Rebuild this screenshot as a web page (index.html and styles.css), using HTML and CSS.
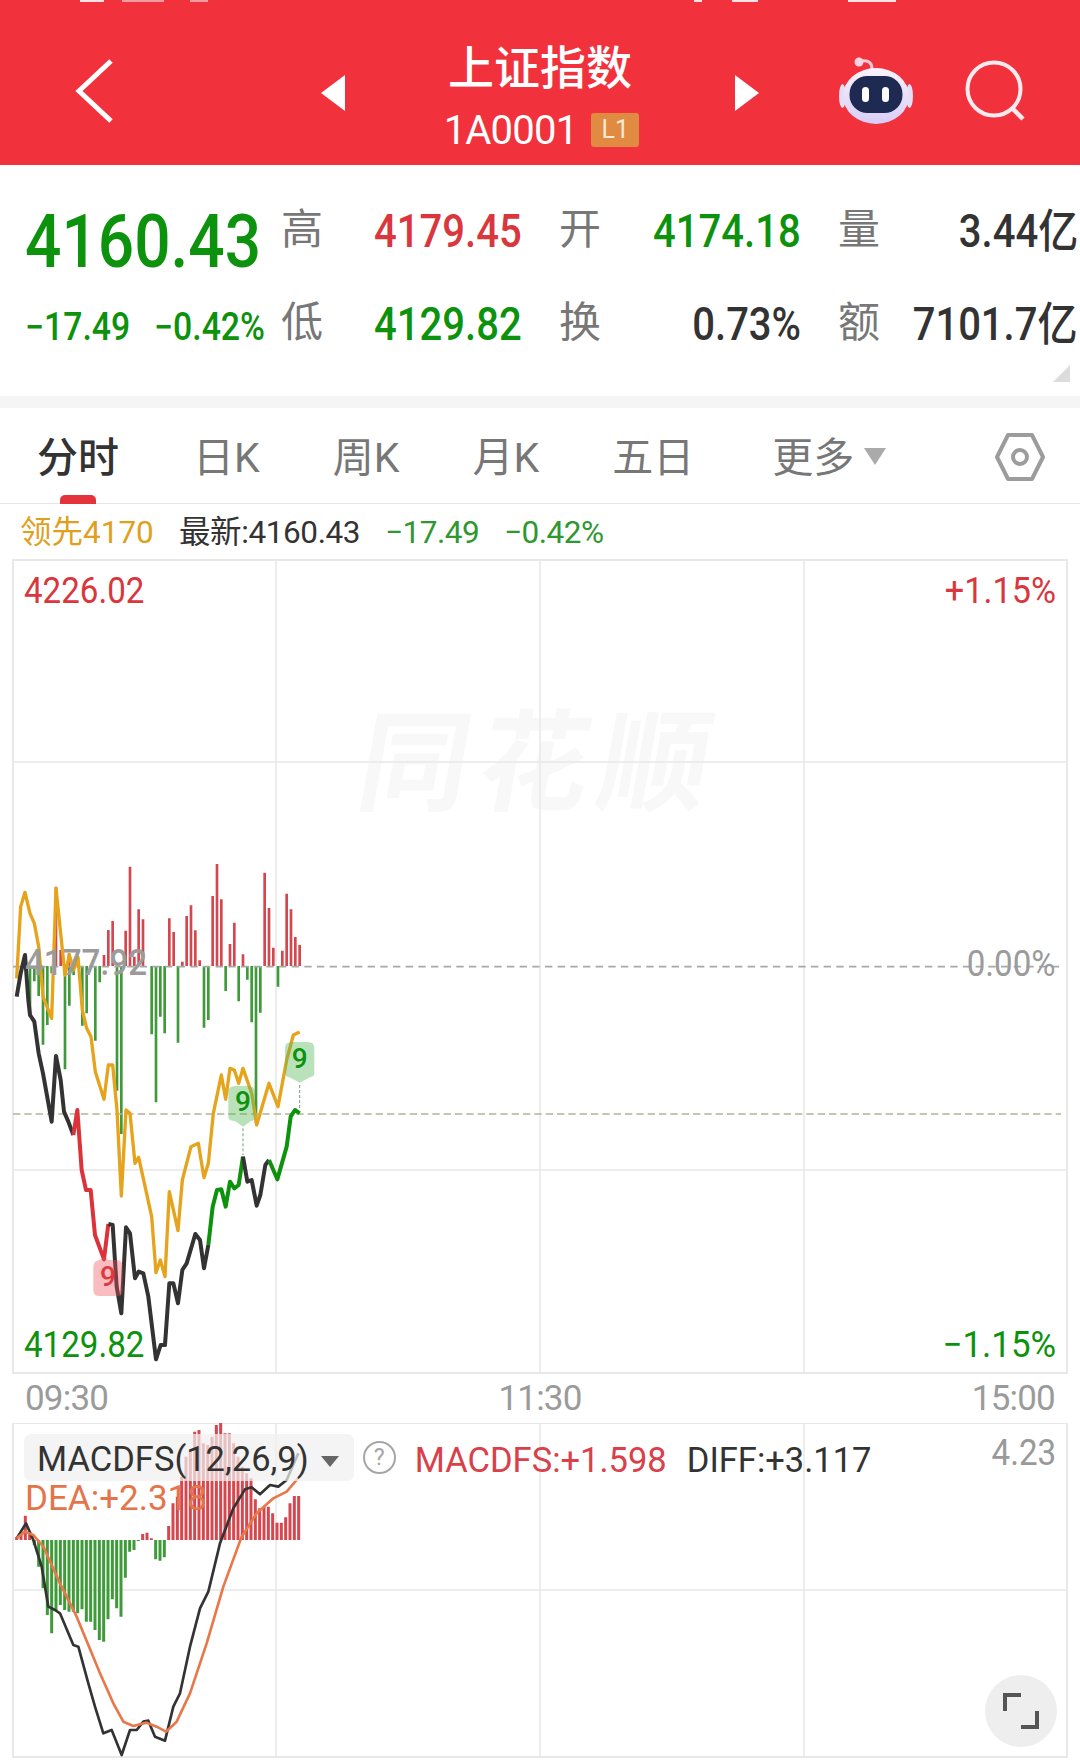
FILE: index.html
```html
<!doctype html>
<html>
<head>
    <meta charset="UTF-8">
    <meta name="viewport" content="width=device-width, initial-scale=1.0">
    <title>上证指数 - 分时</title>
    <link rel="stylesheet" href="styles.css">
</head>

<body>
    <div id="page-header">
        <div class="status-bits">
            <span class="bit bit-a"></span><span class="bit bit-b"></span><span class="bit bit-c"></span>
            <span class="bit bit-d"></span><span class="bit bit-e"></span><span class="bit bit-f"></span>
        </div>
        <div class="header-row">
            <div class="back-cell">
                <svg width="40" height="64" viewBox="0 0 40 64"><path class="line-icon" d="M36 2 L4 32 L36 62"/></svg>
            </div>
            <svg class="arrow" width="24" height="36" viewBox="0 0 24 36"><path d="M24 0 V36 L0 18 Z" fill="#fff"/></svg>
            <div class="title-block">
                <div class="title">上证指数</div>
                <div class="code-row"><span class="code">1A0001</span><span class="badge">L1</span></div>
            </div>
            <svg class="arrow" width="24" height="36" viewBox="0 0 24 36"><path d="M0 0 V36 L24 18 Z" fill="#fff"/></svg>
            <div class="header-icons">
                <!-- robot helper -->
                <svg width="74" height="68" viewBox="0 0 74 68">
                    <defs>
                        <linearGradient id="helmet" x1="0" y1="0" x2="0" y2="1">
                            <stop offset="0" stop-color="#f8f4fc"/>
                            <stop offset="1" stop-color="#d8ccf6"/>
                        </linearGradient>
                    </defs>
                    <path d="M33 12 C33 4 27 3 22 4" fill="none" stroke="#f3c6d6" stroke-width="3"/>
                    <circle cx="20" cy="5" r="4.5" fill="#f7d5e0"/>
                    <ellipse cx="3.5" cy="39" rx="3.5" ry="12" fill="#e6dcf5"/>
                    <ellipse cx="70.5" cy="39" rx="3.5" ry="12" fill="#e6dcf5"/>
                    <ellipse cx="37" cy="39" rx="33" ry="28" fill="url(#helmet)"/>
                    <rect x="10.5" y="19" width="53" height="37" rx="18" fill="#1f2a52"/>
                    <rect x="23" y="30" width="7" height="15" rx="3.5" fill="#fff"/>
                    <rect x="43" y="30" width="7" height="15" rx="3.5" fill="#fff"/>
                </svg>
                <svg width="62" height="62" viewBox="0 0 62 62">
                    <circle cx="29" cy="29" r="26.5" fill="none" stroke="#fdeaee" stroke-width="4"/>
                    <path d="M47 48 L58 59" fill="none" stroke="#fdeaee" stroke-width="4.5"/>
                </svg>
            </div>
        </div>
    </div>

    <div id="quote">
        <div class="big green"><span>4160.43</span></div>
        <div class="lbl">高</div>
        <div class="val red">4179.45</div>
        <div class="lbl">开</div>
        <div class="val green">4174.18</div>
        <div class="lbl">量</div>
        <div class="val last">3.44亿</div>

        <div class="sub green"><span>−17.49</span><span>−0.42%</span></div>
        <div class="lbl">低</div>
        <div class="val green">4129.82</div>
        <div class="lbl">换</div>
        <div class="val">0.73%</div>
        <div class="lbl">额</div>
        <div class="val last">7101.7亿</div>
        <div class="corner"></div>
    </div>

    <div id="tabs">
        <div class="tab active">分时</div>
        <div class="tab">日K</div>
        <div class="tab">周K</div>
        <div class="tab">月K</div>
        <div class="tab wide">五日</div>
        <div class="tab more">更多<i class="caret"></i></div>
        <svg class="hex" width="52" height="50" viewBox="0 0 52 50">
            <path d="M14 3 H38 L49 25 L38 47 H14 L3 25 Z" fill="none" stroke="#9c9c9c" stroke-width="4" stroke-linejoin="round"/>
            <circle cx="26" cy="25" r="7" fill="none" stroke="#9c9c9c" stroke-width="4"/>
        </svg>
    </div>

    <div id="legend">
        <span class="lead">领先4170</span>
        <span class="latest">最新:4160.43</span>
        <span class="chg">−17.49</span>
        <span class="chg">−0.42%</span>
    </div>

    <div class="chart">
        <div class="watermark">同花顺</div>
        <svg class="plot" width="1080" height="815" viewBox="0 559 1080 815">
            <g class="grid">
                <path class="grid-edge" d="M13 560 H1067 V1373 H13 Z"/>
                <path d="M276 560 V1373 M540 560 V1373 M804 560 V1373 M13 762 H1067 M13 1170 H1067"/>
            </g>
            <g transform="translate(0 840) scale(.33333)">
                <path class="bar bar-red" d="M168 378V140M182 378V330M207 378V340M312 378V345M325 378V270M338 378V243M377 378V272M390 378V80M403 378V350M416 378V208M429 378V238M508 378V235M521 378V276M547 378V365M560 378V228M573 378V196M586 378V271M599 378V361M638 378V168M651 378V72M664 378V178M690 378V312M703 378V248M729 378V343M794 378V98M807 378V204M820 378V323M847 378V332M860 378V161M873 378V208M886 378V291M899 378V315"/>
                <path class="bar bar-green" d="M90 378V530M103 378V424M116 378V468M129 378V614M142 378V555M155 378V400M195 378V688M208 378V497M221 378V405M247 378V557M260 378V520M286 378V602M299 378V427M351 378V752M364 378V882M455 378V583M468 378V787M481 378V530M494 378V580M534 378V608M612 378V563M625 378V540M677 378V453M716 378V484M742 378V419M755 378V547M768 378V849M781 378V518M834 378V440"/>
                <path class="zero-line" d="M39 380 H3183"/>
                <path class="last-line" d="M39 822 H3183"/>
                <path class="avg" d="M50 415 L62 200 75 157 90 220 103 250 116 320 129 470 155 535 168 145 182 280 195 405 208 345 221 390 234 352 247 510 260 565 273 590 286 695 312 778 325 675 338 675 351 810 364 1068 378 810 390 820 405 970 416 952 455 1130 468 1298 481 1260 495 1310 508 1055 534 1172 547 1020 573 920 595 910 612 1013 625 970 640 820 664 705 677 778 690 685 703 690 716 730 729 685 755 760 770 855 807 730 834 800 860 660 880 585 899 576"/>
                <path class="price" d="M50 470 L62 400 75 345 85 480 90 525 103 545 116 640 129 700 155 845 168 648 182 720 192 815 205 845 220 885"/>
                <path class="price down" d="M220 885 L232 810 245 990 258 1050 272 1050 285 1185 312 1258 325 1152"/>
                <path class="price" d="M325 1152 L338 1155 350 1340 364 1420 378 1162 390 1180 405 1315 416 1295 430 1300 445 1370 468 1558 482 1515 495 1515 508 1330 520 1330 534 1390 547 1290 560 1270 586 1182 600 1200 612 1285 625 1215"/>
                <path class="price up" d="M625 1215 L638 1100 651 1050 664 1048 677 1100 690 1025 703 1045 716 1035 729 950"/>
                <path class="price" d="M729 950 L742 1025 755 1020 770 1097 781 1065 796 975 807 960"/>
                <path class="price up" d="M807 960 L832 1018 860 920 872 830 885 810 899 820"/>
                <path class="tick-line" d="M899 735 V810 M729 865 V945"/>
                <path class="tag tag-green" d="M855 625 Q855 606 875 606 H923 Q943 606 943 625 V700 Q943 710 930 712 L899 728 L868 712 Q855 710 855 700 Z"/>
                <path class="tag tag-green" d="M685 757 Q685 738 705 738 H745 Q765 738 765 757 V832 Q765 842 752 844 L729 860 L706 844 Q685 842 685 832 Z"/>
                <path class="tag tag-red" d="M280 1280 Q280 1262 298 1260 L312 1250 L326 1260 H350 Q368 1260 368 1280 V1350 Q368 1368 350 1368 H298 Q280 1368 280 1350 Z"/>
                <text class="tag-num num-green" x="899" y="685">9</text>
                <text class="tag-num num-green" x="729" y="812">9</text>
                <text class="tag-num num-red" x="324" y="1339">9</text>
            </g>
        </svg>
        <span class="axis-label red top-left">4226.02</span>
        <span class="axis-label red top-right">+1.15%</span>
        <span class="axis-label gray mid-left">4177.92</span>
        <span class="axis-label gray mid-right">0.00%</span>
        <span class="axis-label green low-left">4129.82</span>
        <span class="axis-label green low-right">−1.15%</span>
    </div>

    <div id="time-axis">
        <span>09:30</span>
        <span>11:30</span>
        <span>15:00</span>
    </div>

    <div class="macd">
        <svg class="plot" width="1080" height="341" viewBox="0 1423 1080 341">
            <g class="grid">
                <path class="grid-edge" d="M13 1423 H1067 V1757 H13 Z"/>
                <path d="M276 1423 V1757 M540 1423 V1757 M804 1423 V1757 M13 1590 H1067"/>
            </g>
            <g transform="translate(0 1400) scale(.33333)">
                <path class="mbar bar-red" d="M50 420V412M63 420V405M76 420V347M89 420V400M428 420V402M441 420V398M454 420V415M506 420V378M519 420V310M532 420V290M545 420V230M558 420V170M571 420V150M584 420V95M597 420V90M610 420V130M623 420V135M636 420V110M649 420V75M662 420V68M675 420V100M688 420V100M701 420V130M714 420V170M727 420V200M740 420V220M753 420V235M766 420V298M779 420V325M792 420V320M805 420V320M818 420V340M831 420V368M844 420V368M857 420V352M870 420V310M883 420V288M896 420V288"/>
                <path class="mbar bar-green" d="M103 420V435M116 420V500M129 420V565M142 420V645M155 420V700M168 420V632M181 420V615M194 420V630M207 420V635M220 420V635M233 420V640M246 420V628M259 420V665M272 420V665M285 420V690M298 420V720M311 420V725M324 420V658M337 420V598M350 420V625M363 420V650M376 420V533M389 420V455M402 420V450M415 420V423M467 420V478M480 420V482M493 420V472"/>
                <path class="diff" d="M50 415 L78 370 100 420 125 500 145 620 165 630 180 640 220 735 235 740 265 850 285 920 310 1000 335 990 365 1065 390 990 410 990 430 965 445 962 465 1010 495 1022 520 920 540 880 570 740 600 625 625 575 660 430 700 325 735 268 755 262 780 283 810 255 835 260 860 240 895 160"/>
                <path class="dea" d="M50 415 L75 395 100 405 130 440 180 550 230 650 300 820 340 910 370 965 400 978 440 968 470 980 498 995 530 965 570 880 620 730 670 560 725 410 770 340 820 295 860 275 900 228"/>
            </g>
        </svg>
        <div class="macd-head">
            <div class="pill">MACDFS(12,26,9)<i class="caret dark"></i></div>
            <i class="help">?</i>
            <span class="macd-val">MACDFS:+1.598</span>
            <span class="diff-val">DIFF:+3.117</span>
        </div>
        <span class="dea-val">DEA:+2.318</span>
        <span class="axis-label gray macd-max">4.23</span>
        <button class="expand">
            <svg width="36" height="36" viewBox="0 0 36 36"><path d="M2 18 V2 H18 M34 18 V34 H18" fill="none" stroke="#555" stroke-width="4"/></svg>
        </button>
    </div>
</body>
</html>
```

FILE: styles.css
```css
body {
    font-family: Roboto, "Noto Sans CJK SC", sans-serif;
    margin: 0;
    width: 1080px;
    height: 1764px;
    overflow: hidden;
    background: #fff;
    color: #333;
}
.red { color: #d9363e; }
.green { color: #0c920c; }
.gray { color: #9b9b9b; }

/* header */
#page-header {
    background: #f1323c;
    height: 165px;
    color: #fff;
}
.status-bits {
    display: flex;
    height: 3px;
}
.bit {
    background: #fbe3e5;
    height: 2px;
}
.bit-a { margin-left: 80px; width: 24px; }
.bit-b { margin-left: 18px; width: 42px; opacity: .6; }
.bit-c { margin-left: 26px; width: 18px; opacity: .6; }
.bit-d { margin-left: 486px; width: 8px; }
.bit-e { margin-left: 30px; width: 26px; }
.bit-f { margin-left: 90px; width: 48px; }
.header-row {
    display: grid;
    grid-template-columns: 321px 24px 390px 24px 1fr;
    align-items: center;
    height: 144px;
    padding-top: 18px;
}
.back-cell {
    padding: 0 0 0 75px;
    height: 64px;
    margin-top: -4px;
}
.line-icon {
    fill: none;
    stroke: #fff;
    stroke-width: 5;
}
.title-block {
    text-align: center;
    margin-top: 3px;
}
.title {
    font-size: 46px;
    font-weight: 500;
    line-height: 54px;
}
.code-row {
    display: flex;
    justify-content: center;
    align-items: center;
    gap: 14px;
    margin-top: 17px;
    padding-left: 3px;
    height: 36px;
}
.code {
    font-size: 40px;
    letter-spacing: -.8px;
}
.badge {
    background: #e08a42;
    color: #fde9d5;
    font-size: 25px;
    width: 48px;
    height: 34px;
    line-height: 34px;
    border-radius: 3px;
    text-align: center;
}
.header-icons {
    display: flex;
    align-items: center;
    gap: 52px;
    padding-left: 80px;
    margin-top: -4px;
}

/* quote block */
#quote {
    position: relative;
    display: grid;
    grid-template-columns: 256px 42px 199px 37px 43px 199px 37px 42px 198px;
    grid-template-areas:
        "a b c . d e . f g"
        "h i j . k l . m n";
    grid-auto-rows: 93px;
    align-items: center;
    height: 213px;
    padding-left: 25px;
    padding-top: 18px;
    border-bottom: 12px solid #f5f5f5;
    font-size: 46px;
    font-weight: 500;
}
.big {
    font-size: 74px;
    font-weight: 500;
    padding-top: 24px;
    white-space: nowrap;
}
.big span {
    display: inline-block;
    transform: scaleX(.865);
    transform-origin: left center;
}
.sub {
    display: flex;
    gap: 11px;
    font-size: 38px;
    padding-top: 8px;
}
.sub span {
    display: block;
    transform: scaleX(.89);
    transform-origin: left center;
}
.lbl {
    color: #777;
    font-size: 42px;
    font-weight: 400;
    line-height: 50px;
}
.val {
    justify-self: end;
    line-height: 54px;
    padding-top: 2px;
    white-space: nowrap;
    transform: scaleX(.87);
    transform-origin: right center;
}
#quote > :nth-child(1) { grid-area: a; }
#quote > :nth-child(2) { grid-area: b; }
#quote > :nth-child(3) { grid-area: c; }
#quote > :nth-child(4) { grid-area: d; }
#quote > :nth-child(5) { grid-area: e; }
#quote > :nth-child(6) { grid-area: f; }
#quote > :nth-child(7) { grid-area: g; }
#quote > :nth-child(8) { grid-area: h; }
#quote > :nth-child(9) { grid-area: i; }
#quote > :nth-child(10) { grid-area: j; }
#quote > :nth-child(11) { grid-area: k; }
#quote > :nth-child(12) { grid-area: l; }
#quote > :nth-child(13) { grid-area: m; }
#quote > :nth-child(14) { grid-area: n; }
.corner {
    position: absolute;
    right: 10px;
    bottom: 14px;
    width: 0;
    height: 0;
    border-left: 17px solid transparent;
    border-bottom: 17px solid #dcdcdc;
}

/* period tabs */
#tabs {
    position: relative;
    display: flex;
    align-items: center;
    gap: 73px;
    height: 96px;
    padding: 0 0 3px 37px;
    box-sizing: border-box;
    border-bottom: 1.5px solid #e6e6e6;
    font-size: 41px;
    color: #777;
}
.tab {
    position: relative;
    white-space: nowrap;
}
.tab.active {
    color: #333;
    font-weight: 500;
    margin-right: 1px;
}
.tab.active::after {
    content: "";
    position: absolute;
    left: 23px;
    bottom: -20px;
    width: 36px;
    height: 9px;
    background: #e5333b;
    border-radius: 5px 5px 0 0;
}
.tab.wide {
    margin-right: 5px;
}
.caret {
    display: inline-block;
    margin-left: 10px;
    vertical-align: 7px;
    border-left: 11px solid transparent;
    border-right: 11px solid transparent;
    border-top: 17px solid #aaa;
}
.caret.dark {
    margin-left: 12px;
    vertical-align: 4px;
    border-left-width: 9px;
    border-right-width: 9px;
    border-top: 11px solid #666;
}
.hex {
    position: absolute;
    left: 994px;
    top: 24px;
}

/* price legend */
#legend {
    display: flex;
    align-items: center;
    height: 55px;
    padding: 3px 0 0 20px;
    box-sizing: border-box;
    font-size: 31.5px;
    line-height: 40px;
    white-space: nowrap;
}
.lead {
    color: #e0a01e;
    width: 159px;
}
.latest {
    width: 206px;
    letter-spacing: -.4px;
}
.chg {
    color: #2f972f;
    width: 119px;
    letter-spacing: -.5px;
}

/* charts */
.chart, .macd {
    position: relative;
}
.chart { height: 815px; }
.macd { height: 341px; }
.plot {
    display: block;
    position: relative;
}
.grid path {
    fill: none;
    stroke: #e8e8e8;
    stroke-width: 1.5;
}
.grid .grid-edge {
    stroke-width: 2;
}
.watermark {
    position: absolute;
    left: 360px;
    top: 136px;
    font-size: 110px;
    font-weight: 700;
    letter-spacing: 10px;
    line-height: 140px;
    color: #f8f8f8;
    transform: skewX(-10deg);
    white-space: nowrap;
}
.bar, .mbar {
    fill: none;
    stroke-width: 8;
}
.mbar {
    stroke-width: 9;
}
.bar-red { stroke: #d5474e; }
.bar-green { stroke: #3f9a3a; }
.zero-line {
    fill: none;
    stroke: #a8a8a8;
    stroke-width: 5;
    stroke-dasharray: 22 16;
}
.last-line {
    fill: none;
    stroke: #b3b39c;
    stroke-width: 4;
    stroke-dasharray: 22 12;
}
.avg, .price, .diff, .dea {
    fill: none;
    stroke-linejoin: round;
}
.avg {
    stroke: #e6a31c;
    stroke-width: 10;
}
.price {
    stroke: #333;
    stroke-width: 12;
}
.price.down { stroke: #dc3239; }
.price.up { stroke: #0c920c; }
.tick-line {
    fill: none;
    stroke: #6aa56a;
    stroke-width: 3;
    stroke-dasharray: 9 6;
}
.tag-green { fill: rgba(90, 185, 90, .42); }
.tag-red { fill: rgba(238, 80, 90, .38); }
.tag-num {
    font-size: 84px;
    font-weight: 500;
    text-anchor: middle;
}
.num-green { fill: #0c920c; }
.num-red { fill: #e0383f; }
.diff {
    stroke: #333;
    stroke-width: 8;
}
.dea {
    stroke: #e8784a;
    stroke-width: 8;
}
.axis-label {
    position: absolute;
    font-size: 36px;
    line-height: 40px;
    white-space: nowrap;
    transform: scaleX(.92);
    transform-origin: left center;
}
.top-left { left: 24px; top: 12px; }
.top-right { right: 24px; top: 12px; transform: scaleX(.95); transform-origin: right center; }
.mid-left { left: 25px; top: 384px; font-weight: 500; }
.mid-right { right: 24px; top: 385px; transform-origin: right center; }
.low-left { left: 24px; top: 766px; }
.low-right { right: 24px; top: 766px; transform: scaleX(.97); transform-origin: right center; }
.macd-max { right: 24px; top: 10px; color: #999; transform-origin: right center; }

#time-axis {
    display: flex;
    justify-content: space-between;
    align-items: center;
    height: 49px;
    padding: 0 25px;
    font-size: 35px;
    letter-spacing: -.8px;
    color: #9b9b9b;
}

/* macd panel */
.macd-head {
    position: absolute;
    left: 24px;
    top: 11px;
    display: flex;
    align-items: center;
    height: 47px;
    font-size: 34.5px;
    white-space: nowrap;
}
.pill {
    background: rgba(240, 240, 240, .72);
    border-radius: 7px;
    height: 47px;
    line-height: 51px;
    padding: 0 15px 0 13px;
}
.help {
    width: 29px;
    height: 29px;
    line-height: 29px;
    margin-left: 9px;
    border: 2px solid #a5a5a5;
    border-radius: 50%;
    color: #a5a5a5;
    font-size: 23px;
    font-style: normal;
    text-align: center;
}
.macd-val {
    color: #d9404a;
    margin-left: 19px;
    padding-top: 4px;
}
.diff-val {
    margin-left: 20px;
    padding-top: 4px;
}
.dea-val {
    position: absolute;
    left: 25px;
    top: 55px;
    font-size: 35px;
    line-height: 42px;
    color: #e4744a;
}
.expand {
    position: absolute;
    left: 985px;
    top: 252px;
    width: 72px;
    height: 72px;
    padding: 0;
    border: none;
    border-radius: 50%;
    background: #eee;
    display: flex;
    align-items: center;
    justify-content: center;
}
```
